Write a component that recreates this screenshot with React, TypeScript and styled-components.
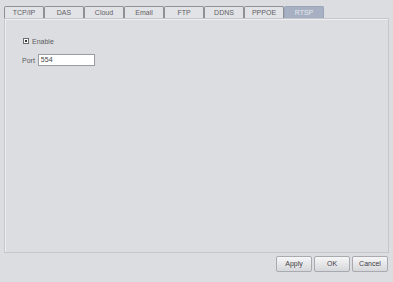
import React from "react";
import styled, { createGlobalStyle } from "styled-components";

const Global = createGlobalStyle`
  html, body { margin: 0; padding: 0; background: #dcdde1; }
  body { font-family: "Liberation Sans", Arial, sans-serif; }
`;

const Page = styled.div`
  width: 393px;
  height: 282px;
  box-sizing: border-box;
  padding: 6px 4px 0 4px;
  display: flex;
  flex-direction: column;
  background: #dcdde1;
`;

const TabBar = styled.div`
  display: flex;
  height: 12px;
`;

const Tab = styled.div<{ $active?: boolean }>`
  width: 40px;
  box-sizing: border-box;
  height: 12px;
  border: 1px solid ${(p) => (p.$active ? "#9aa5b8" : "#8e9096")};
  border-bottom: none;
  border-radius: 2px 2px 0 0;
  background: ${(p) => (p.$active ? "#a6b0c2" : "#e2e3e6")};
  color: ${(p) => (p.$active ? "#e6e9f0" : "#5f6065")};
  font-size: 7px;
  line-height: 11px;
  text-align: center;
  white-space: nowrap;
`;

const Panel = styled.div`
  height: 235px;
  width: 385px;
  box-sizing: border-box;
  border: 1px solid #c6c7cc;
  box-shadow: inset 1px 1px 0 #eeeff1;
  padding: 17px 0 0 17px;
  display: flex;
  flex-direction: column;
  gap: 8px;
`;

const Row = styled.div<{ $h?: number }>`
  display: flex;
  align-items: center;
  height: ${(p) => p.$h ?? 10}px;
  font-size: 7px;
  color: #5a5b60;
`;

const Check = styled.span`
  width: 6px;
  height: 6px;
  box-sizing: border-box;
  border: 1px solid #6a6b70;
  background: #fff;
  margin: 0 3px 0 1px;
  position: relative;
  &::after {
    content: "";
    position: absolute;
    left: 1px;
    top: 1px;
    width: 2px;
    height: 2px;
    background: #333;
  }
`;

const Label = styled.span`
  margin-right: 3px;
`;

const Input = styled.div`
  width: 57px;
  height: 12px;
  box-sizing: border-box;
  border: 1px solid #9b9ca1;
  background: #fff;
  font-size: 7px;
  line-height: 10px;
  padding-left: 2px;
  color: #444;
`;

const Footer = styled.div`
  display: flex;
  justify-content: flex-end;
  gap: 2px;
  padding: 3px 1px 0 0;
`;

const Button = styled.div`
  width: 36px;
  height: 16px;
  box-sizing: border-box;
  border: 1px solid #a9aaaf;
  border-radius: 2px;
  background: linear-gradient(#f6f6f7, #d6d7da);
  font-size: 7px;
  line-height: 14px;
  text-align: center;
  color: #3f4045;
`;

const tabs = ["TCP/IP", "DAS", "Cloud", "Email", "FTP", "DDNS", "PPPOE", "RTSP"];

export default function App() {
  return (
    <>
      <Global />
      <Page>
        <TabBar>
          {tabs.map((t) => (
            <Tab key={t} $active={t === "RTSP"}>
              {t}
            </Tab>
          ))}
        </TabBar>
        <Panel>
          <Row>
            <Check />
            <span>Enable</span>
          </Row>
          <Row $h={12}>
            <Label>Port</Label>
            <Input>554</Input>
          </Row>
        </Panel>
        <Footer>
          <Button>Apply</Button>
          <Button>OK</Button>
          <Button>Cancel</Button>
        </Footer>
      </Page>
    </>
  );
}
